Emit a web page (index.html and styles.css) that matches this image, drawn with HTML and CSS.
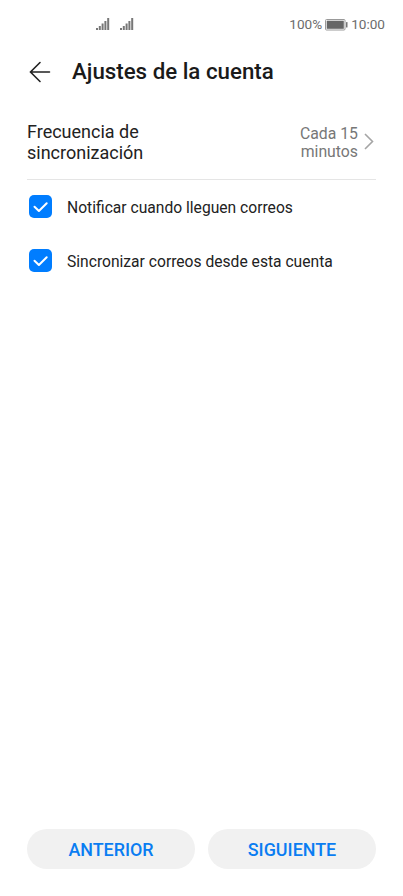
FILE: index.html
```html
<!DOCTYPE html>
<html lang="es">
<head>
    <meta charset="UTF-8">
    <meta name="viewport" content="width=device-width, initial-scale=1.0">
    <title>Ajustes de la cuenta</title>
    <link rel="stylesheet" href="styles.css">
</head>
<body>
    <div class="screen">
        <div class="status-bar">
            <div class="signals">
                <svg class="signal" viewBox="0 0 14 13"><path d="M0 10h2v2H0zM2.8 8h2v4h-2zM5.6 5.5h2V12h-2zM8.4 3h2v9h-2zM11.2 0h2v12h-2z"/></svg>
                <svg class="signal" viewBox="0 0 14 13"><path d="M0 10h2v2H0zM2.8 8h2v4h-2zM5.6 5.5h2V12h-2zM8.4 3h2v9h-2zM11.2 0h2v12h-2z"/></svg>
            </div>
            <div class="status-right">
                <span class="percent">100%</span>
                <svg class="battery" viewBox="0 0 23 12">
                    <rect x="0.5" y="0.5" width="19.5" height="10.5" rx="1" fill="none" stroke="#999"/>
                    <rect x="1.7" y="1.7" width="17.1" height="8.1" fill="#666"/>
                    <rect x="21" y="3" width="1.5" height="5.5" rx="0.5" fill="#777"/>
                </svg>
                <span class="clock">10:00</span>
            </div>
        </div>

        <header class="header">
            <svg class="back" viewBox="0 0 22 22"><path d="M11 1.5L1.5 11l9.5 9.5M1.5 11H20.5"/></svg>
            <h1>Ajustes de la cuenta</h1>
        </header>

        <div class="frequency">
            <div class="label">Frecuencia de<br>sincronización</div>
            <div class="value">Cada 15<br>minutos</div>
            <svg class="chevron" viewBox="0 0 10 17"><path d="M1 1l7.5 7.5L1 16"/></svg>
        </div>

        <div class="option">
            <span class="checkbox"><svg viewBox="0 0 23 23"><path d="M5.5 11.7l4.4 4.3 7.8-7.8"/></svg></span>
            <span class="text">Notificar cuando lleguen correos</span>
        </div>
        <div class="option">
            <span class="checkbox"><svg viewBox="0 0 23 23"><path d="M5.5 11.7l4.4 4.3 7.8-7.8"/></svg></span>
            <span class="text">Sincronizar correos desde esta cuenta</span>
        </div>

        <div class="buttons">
            <button>ANTERIOR</button>
            <button>SIGUIENTE</button>
        </div>
    </div>
</body>
</html>
```
FILE: styles.css
```css
* {
    box-sizing: border-box;
}
body {
    margin: 0;
    font-family: Roboto, sans-serif;
    background-color: #fff;
    color: #222;
}
.screen {
    display: flex;
    flex-direction: column;
    height: 896px;
    padding: 0 27px 27px;
}
.status-bar {
    display: flex;
    justify-content: space-between;
    align-items: center;
    height: 49px;
    margin: 0 -9px 0 69px;
    color: #6c6c6c;
    font-size: 13.6px;
}
.signals {
    display: flex;
    gap: 10px;
}
.signal {
    width: 14px;
    height: 13px;
    fill: #777;
}
.status-right {
    display: flex;
    align-items: center;
    gap: 3px;
}
.percent, .clock {
    padding-bottom: 1px;
}
.battery {
    width: 23px;
    height: 12px;
}
.header {
    display: flex;
    align-items: center;
    height: 46px;
    padding-left: 2px;
}
.back {
    width: 22px;
    height: 22px;
    margin-right: 21px;
    fill: none;
    stroke: #222;
    stroke-width: 1.6;
    stroke-linecap: round;
}
h1 {
    margin: 0 0 2px;
    font-size: 22.3px;
    font-weight: 500;
    line-height: 30px;
    color: #1a1a1a;
}
.frequency {
    display: flex;
    align-items: center;
    height: 85px;
    padding-top: 9px;
    border-bottom: 1px solid #e5e5e5;
}
.label {
    flex: 1;
    font-size: 18px;
    line-height: 21px;
}
.value {
    padding-top: 3px;
    font-size: 15.8px;
    line-height: 18px;
    text-align: right;
    color: #777;
}
.chevron {
    width: 10px;
    height: 17px;
    margin: 0 2px 0 6px;
    fill: none;
    stroke: #a5a5a5;
    stroke-width: 1.6;
}
.option {
    display: flex;
    align-items: center;
    height: 54px;
    padding-left: 2px;
}
.checkbox {
    width: 23px;
    height: 23px;
    margin-right: 15px;
    margin-bottom: 1px;
    border-radius: 5px;
    background-color: #007dff;
}
.checkbox svg {
    display: block;
    fill: none;
    stroke: #fff;
    stroke-width: 2;
    stroke-linecap: round;
    stroke-linejoin: round;
}
.text {
    padding-top: 1px;
    font-size: 15.63px;
}
.buttons {
    display: flex;
    gap: 13px;
    margin-top: auto;
}
button {
    flex: 1;
    height: 40px;
    padding: 0;
    border: none;
    border-radius: 20px;
    background-color: #f1f1f1;
    color: #0a7df2;
    font-family: inherit;
    font-size: 17.9px;
    font-weight: 500;
    cursor: pointer;
}
```
